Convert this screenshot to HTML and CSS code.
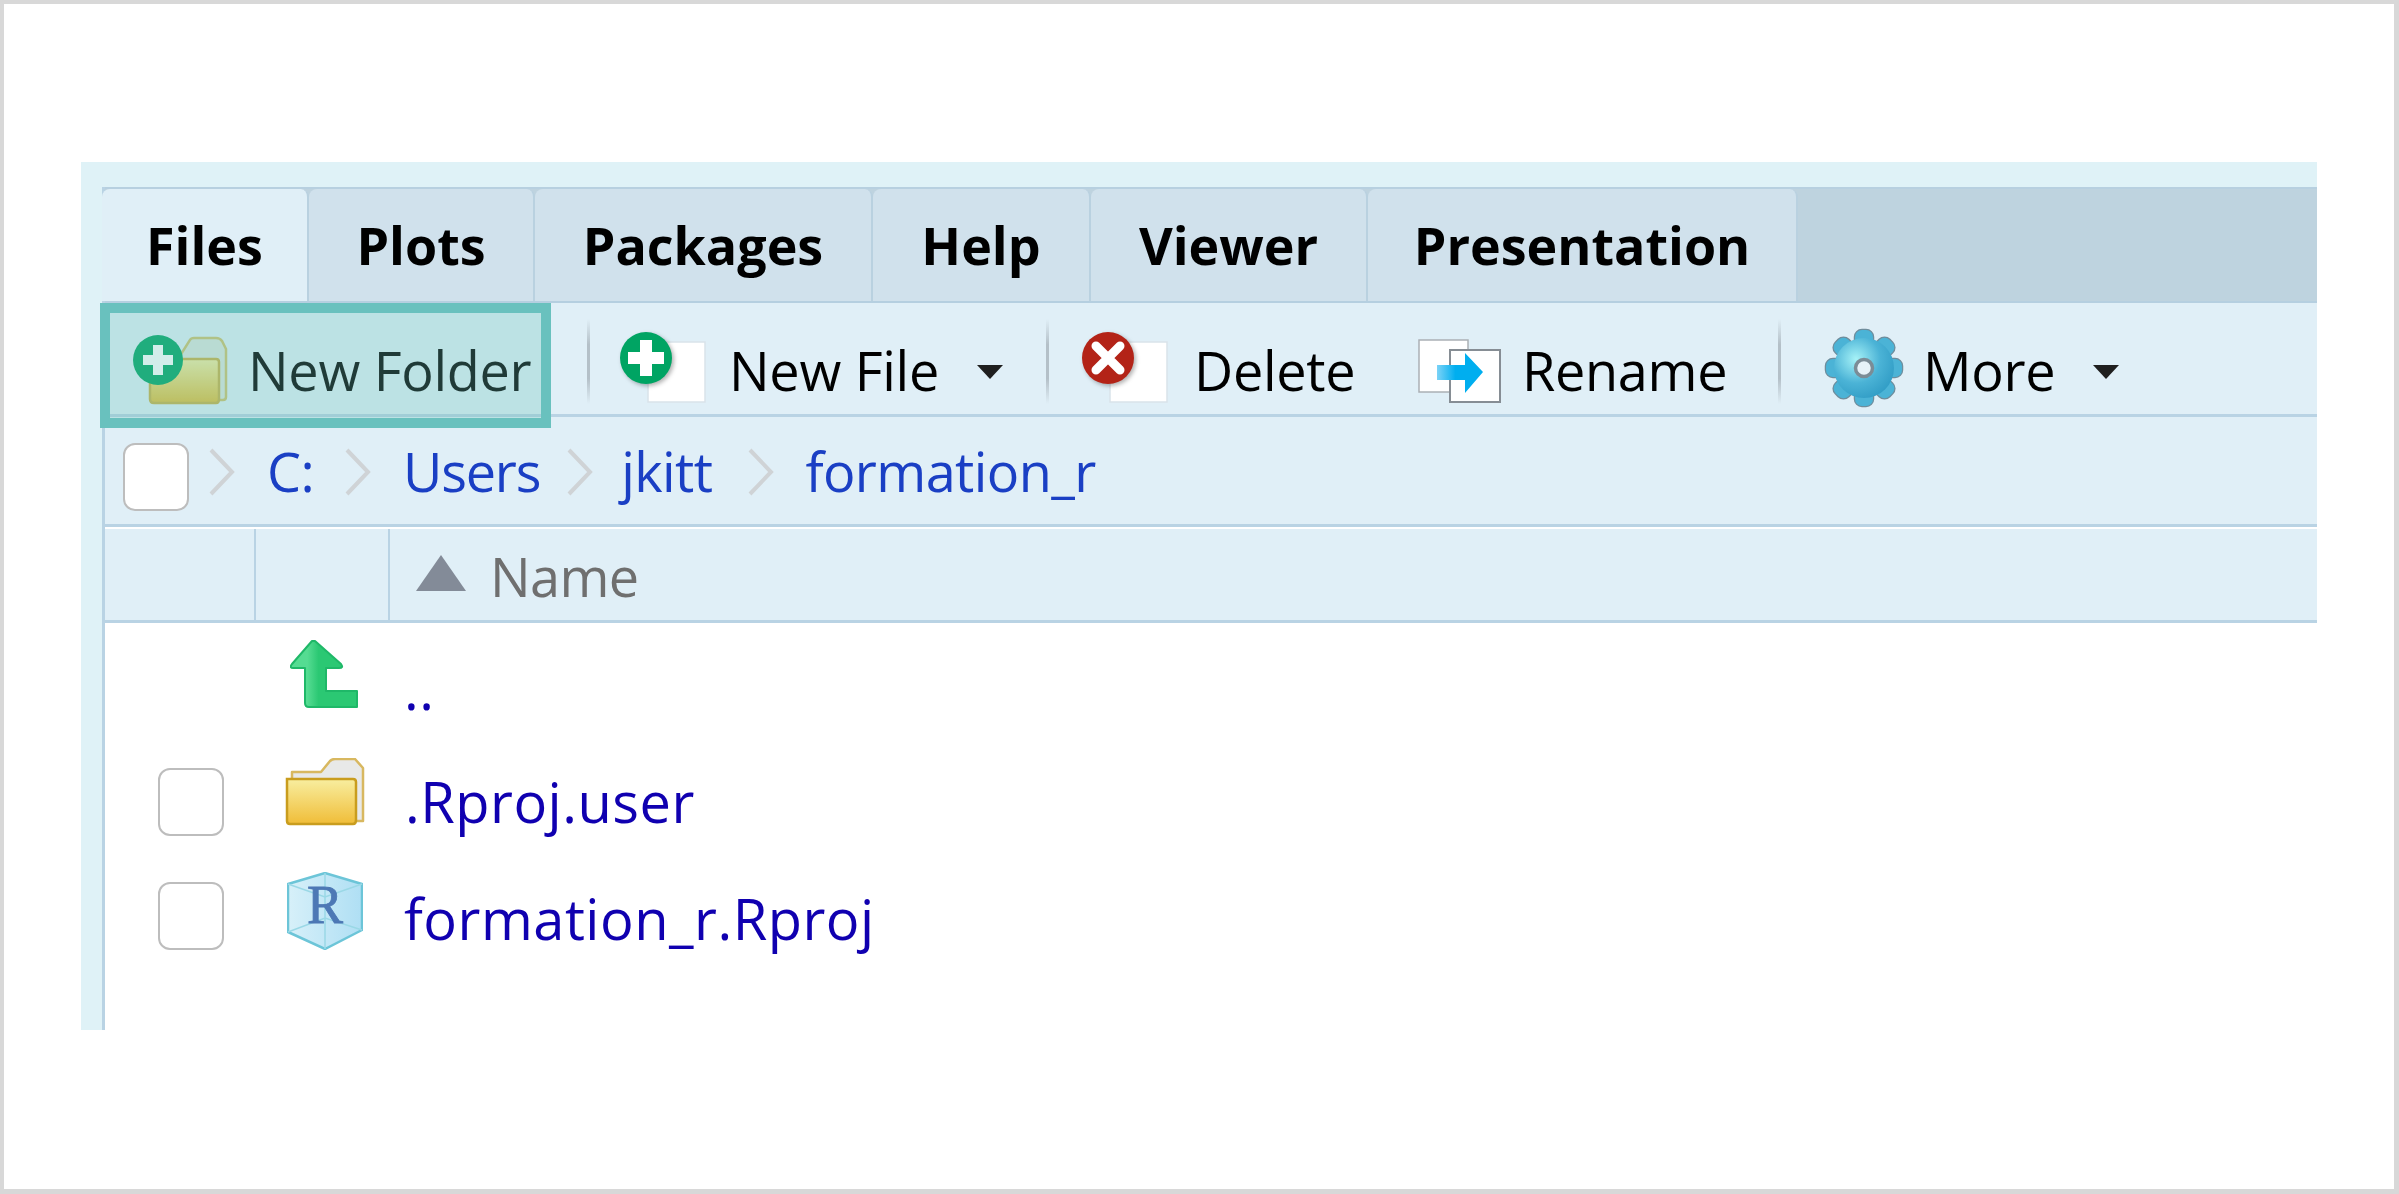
FILE: index.html
```html
<!DOCTYPE html>
<html lang="en">
<head>
<meta charset="utf-8">
<title>Files pane</title>
<link rel="stylesheet" href="styles.css">
</head>
<body>
<main class="panel">
  <div class="pane">
    <nav class="tabs">
      <div class="tab tab-files active">Files</div>
      <div class="tab tab-plots">Plots</div>
      <div class="tab tab-packages">Packages</div>
      <div class="tab tab-help">Help</div>
      <div class="tab tab-viewer">Viewer</div>
      <div class="tab tab-presentation">Presentation</div>
    </nav>
    <div class="toolbar">
      <div class="tool tool-folder">
        <svg class="ico ico-folder" viewBox="0 0 80 68">
          <defs><linearGradient id="fg1" x1="0" y1="0" x2="0" y2="1"><stop offset="0" stop-color="#f3eda5"/><stop offset="1" stop-color="#e0bd3c"/></linearGradient></defs>
          <path d="M30 22 L42 3 Q43 1 46 1 L68 1 Q72 1 74 4 L78 12 L78 60 Q78 63 75 63 L30 63Z" fill="#dbe6df" stroke="#cfc270" stroke-width="2.5"/>
          <path d="M2 22 H68 Q71 22 71 25 V62 Q71 66 68 66 H6 Q2 66 2 62Z" fill="url(#fg1)" stroke="#c9b048" stroke-width="2.5"/>
          <circle cx="10" cy="23" r="25" fill="#00a463"/>
          <path d="M5 8H15V18H25V28H15V38H5V28H-5V18H5Z" fill="#fff"/>
        </svg>
        <span>New Folder</span>
      </div>
      <div class="sep sep-a"></div>
      <div class="tool tool-file">
        <svg class="ico ico-page" viewBox="0 0 86 72">
          <rect x="28" y="10" width="57" height="60" fill="#fff" stroke="#d9e3ea" stroke-width="1.5"/>
          <circle class="badge" cx="26" cy="26" r="26" fill="#00a463"/>
          <path d="M20 8H32V20H44V32H32V44H20V32H8V20H20Z" fill="#fff"/>
        </svg>
        <span>New File</span>
      </div>
      <svg class="caret" viewBox="0 0 26 14"><path d="M0 0H26L13 14Z" fill="#1f1f1f"/></svg>
      <div class="sep sep-b"></div>
      <div class="tool tool-delete">
        <svg class="ico ico-page" viewBox="0 0 86 72">
          <rect x="28" y="10" width="57" height="60" fill="#fff" stroke="#d9e3ea" stroke-width="1.5"/>
          <circle class="badge" cx="26" cy="26" r="26" fill="#b32317"/>
          <path d="M26 26L14 14M26 26L38 14M26 26L14 38M26 26L38 38" stroke="#fff" stroke-width="9" stroke-linecap="round"/>
        </svg>
        <span>Delete</span>
      </div>
      <div class="tool tool-rename">
        <svg class="ico ico-rename" viewBox="0 0 84 64">
          <defs><linearGradient id="ar" x1="0" x2="1" y1="0" y2="0"><stop offset="0" stop-color="#7cd3f7"/><stop offset=".4" stop-color="#00aeef"/></linearGradient></defs>
          <rect x="1" y="1" width="49" height="52" fill="#fff" stroke="#aab0b5" stroke-width="1.5"/>
          <rect x="32" y="11" width="50" height="52" fill="#fff" stroke="#868d94" stroke-width="2"/>
          <path d="M19 26H47V14L65 33L47 54V41H19Z" fill="url(#ar)"/>
        </svg>
        <span>Rename</span>
      </div>
      <div class="sep sep-c"></div>
      <div class="tool tool-more">
        <svg class="ico ico-gear" viewBox="0 0 80 78">
          <defs>
            <radialGradient id="gr" gradientUnits="userSpaceOnUse" cx="32" cy="30" r="44"><stop offset="0" stop-color="#a6f2f7"/><stop offset=".55" stop-color="#4bb3d6"/><stop offset="1" stop-color="#2f9bc4"/></radialGradient>
            <g id="gear-shape">
              <circle cx="40" cy="39" r="28"/>
              <rect x="31" y="1" width="18" height="22" rx="7"/>
              <rect x="31" y="1" width="18" height="22" rx="7" transform="rotate(45 40 39)"/>
              <rect x="31" y="1" width="18" height="22" rx="7" transform="rotate(90 40 39)"/>
              <rect x="31" y="1" width="18" height="22" rx="7" transform="rotate(135 40 39)"/>
              <rect x="31" y="1" width="18" height="22" rx="7" transform="rotate(180 40 39)"/>
              <rect x="31" y="1" width="18" height="22" rx="7" transform="rotate(225 40 39)"/>
              <rect x="31" y="1" width="18" height="22" rx="7" transform="rotate(270 40 39)"/>
              <rect x="31" y="1" width="18" height="22" rx="7" transform="rotate(315 40 39)"/>
            </g>
          </defs>
          <use href="#gear-shape" fill="#6f8d9c" stroke="#6f8d9c" stroke-width="2.5"/>
          <use href="#gear-shape" fill="#4bb3d6"/>
          <circle cx="40" cy="39" r="30" fill="url(#gr)"/>
          <circle cx="40" cy="39" r="8.500" fill="#e6f2f8" stroke="#7b8c96" stroke-width="3.500"/>
        </svg>
        <span>More</span>
      </div>
      <svg class="caret" viewBox="0 0 26 14"><path d="M0 0H26L13 14Z" fill="#1f1f1f"/></svg>
    </div>
    <div class="crumbs">
      <div class="check check-home"></div>
      <svg class="chev chev-1" viewBox="0 0 26 48"><path d="M2 2L23 24L2 46" fill="none" stroke="#cfd3d6" stroke-width="4"/></svg>
      <a class="crumb crumb-c">C:</a>
      <svg class="chev chev-2" viewBox="0 0 26 48"><path d="M2 2L23 24L2 46" fill="none" stroke="#cfd3d6" stroke-width="4"/></svg>
      <a class="crumb crumb-users">Users</a>
      <svg class="chev chev-3" viewBox="0 0 26 48"><path d="M2 2L23 24L2 46" fill="none" stroke="#cfd3d6" stroke-width="4"/></svg>
      <a class="crumb crumb-jkitt">jkitt</a>
      <svg class="chev chev-4" viewBox="0 0 26 48"><path d="M2 2L23 24L2 46" fill="none" stroke="#cfd3d6" stroke-width="4"/></svg>
      <a class="crumb crumb-dir">formation_r</a>
    </div>
    <div class="thead">
      <div class="th th-check"></div>
      <div class="th th-icon"></div>
      <div class="th th-name">
        <svg class="sort" viewBox="0 0 50 36"><path d="M25 0L50 36H0Z" fill="#838b98"/></svg>
        <span class="th-label">Name</span>
      </div>
    </div>
    <div class="rows">
      <div class="row row-up">
        <div class="cell-check"></div>
        <svg class="file-ico up-ico" viewBox="0 0 68 68">
          <defs><linearGradient id="up" x1="0" x2="1" y1="0" y2="0"><stop offset=".25" stop-color="#55dc92"/><stop offset=".42" stop-color="#2bc873"/></linearGradient></defs>
          <path d="M25 1L51 24Q54 28 49 28H36V51H67V67H19Q15 67 15 63V28H3Q-1 28 2 24L22 1Z" fill="url(#up)" stroke="#1fb868" stroke-width="2" stroke-linejoin="round"/>
        </svg>
        <a class="fname fname-up">..</a>
      </div>
      <div class="row row-dir">
        <div class="cell-check"><div class="check"></div></div>
        <svg class="file-ico dir-ico" viewBox="0 0 80 68">
          <defs><linearGradient id="fg2" x1="0" y1="0" x2="0" y2="1"><stop offset="0" stop-color="#f8eea0"/><stop offset="1" stop-color="#f0bd38"/></linearGradient></defs>
          <path d="M7 14H36L45 3Q47 1 50 1H70L78 10V63H7Z" fill="#e8e9e8" stroke="#d8b860" stroke-width="2.500" stroke-linejoin="round"/>
          <path d="M2 21H68Q71 21 71 24V62Q71 66 68 66H5Q2 66 2 63V21Z" fill="url(#fg2)" stroke="#c99d1e" stroke-width="2.500"/>
        </svg>
        <a class="fname">.Rproj.user</a>
      </div>
      <div class="row row-proj">
        <div class="cell-check"><div class="check"></div></div>
        <svg class="file-ico proj-ico" viewBox="0 0 76 78">
          <defs><linearGradient id="cube" x1="0" x2="1" y1="0" y2="0"><stop offset="0" stop-color="#d7f0f9"/><stop offset="1" stop-color="#afdff4"/></linearGradient></defs>
          <path d="M38 1L75 12V58L38 77L1 60V12Z" fill="url(#cube)" stroke="#6cc5d8" stroke-width="2.500" stroke-linejoin="round"/>
          <path d="M1 12L38 25L75 12M38 1V77M1 60L38 46L75 58" fill="none" stroke="#9ad8e6" stroke-width="1.500"/>
          <text x="38" y="51" class="r-letter">R</text>
        </svg>
        <a class="fname">formation_r.Rproj</a>
      </div>
    </div>
  </div>
  <div class="highlight"></div>
</main>
</body>
</html>
```

FILE: styles.css
```css
* { box-sizing: border-box; }
html, body { margin: 0; height: 100%; }
body {
  background: #fff;
  border: 5px solid #d8d8d8;
  border-left-width: 4px;
  border-top-width: 4px;
  padding: 158px 77px 159px 77px;
  font-family: "Open Sans", "Liberation Sans", sans-serif;
}
.panel {
  position: relative;
  height: 868px;
  background: #dff2f7;
  padding: 25px 0 0 21px;
}
.pane {
  height: 100%;
  background: #fff;
  border-left: 3px solid #b9d3e4;
  display: flex;
  flex-direction: column;
}
.tabs {
  height: 116px;
  flex: none;
  display: flex;
  background: #bed3df;
  border-top: 2px solid #b7d0e0;
  border-bottom: 2px solid #b5cfe0;
}
.tab {
  display: flex;
  align-items: center;
  justify-content: center;
  background: #d0e1ec;
  border-right: 2px solid #b9d1e0;
  border-radius: 8px 8px 0 0;
  font-size: 52px;
  font-weight: 700;
  color: #000;
  padding-bottom: 2px;
}
.tab.active { background: #e0eff7; }
.tab-files { width: 207px; margin-left: -3px; }
.tab-plots { width: 226px; }
.tab-packages { width: 338px; }
.tab-help { width: 218px; }
.tab-viewer { width: 277px; }
.tab-presentation { width: 430px; }
.toolbar {
  height: 114px;
  flex: none;
  display: flex;
  align-items: flex-start;
  background: #e0eff7;
  border-bottom: 3px solid #b9d3e4;
  font-size: 54px;
  letter-spacing: -.3px;
  color: #000;
}
.tool { display: flex; align-items: flex-start; height: 100%; white-space: nowrap; flex: none; }
.tool span { margin-top: 31px; line-height: 72px; }
.ico { display: block; flex: none; }
.ico-folder { width: 80px; height: 68px; margin-top: 34px; overflow: visible; }
.ico-page { width: 86px; height: 72px; margin-top: 29px; overflow: visible; }
.ico-rename { width: 84px; height: 64px; margin-top: 36px; }
.ico-gear { width: 80px; height: 78px; margin-top: 26px; overflow: visible; }
.badge { filter: drop-shadow(2px 2px 2px rgba(0, 0, 0, .3)); }
.tool-folder { width: 439px; margin-left: 43px; }
.tool-folder span { margin-left: 20px; }
.tool-file { width: 357px; }
.tool-file span { margin-left: 23px; }
.tool-delete { width: 336px; }
.tool-delete span { margin-left: 26px; }
.tool-rename { width: 360px; }
.tool-rename span { margin-left: 20px; }
.tool-more { width: 269px; }
.tool-more span { margin-left: 19px; }
.sep {
  width: 3px;
  height: 85px;
  margin-top: 16px;
  flex: none;
  background: linear-gradient(#e0eff7, #b4c0c8 30%, #b4c0c8 70%, #e0eff7);
}
.sep-a { margin-right: 30px; }
.sep-b { margin-left: 43px; margin-right: 33px; }
.sep-c { margin-right: 43px; }
.caret { flex: none; width: 26px; height: 14px; margin-top: 62px; }
.crumbs {
  height: 110px;
  flex: none;
  display: flex;
  align-items: center;
  background: #e0eff7;
  border-bottom: 3px solid #b9d3e4;
  font-size: 54px;
  letter-spacing: -.6px;
}
.check {
  width: 66px;
  height: 68px;
  background: #fff;
  border: 2px solid #bdbdbd;
  border-radius: 12px;
  flex: none;
}
.check-home { margin-left: 18px; margin-top: 12px; }
.chev { flex: none; width: 26px; height: 48px; margin-top: 2px; }
.chev-1 { margin-left: 20px; }
.chev-2 { margin-left: 31px; }
.chev-3 { margin-left: 27px; }
.chev-4 { margin-left: 36px; }
.crumb { color: #1a3fc4; }
.crumb-c { margin-left: 32px; }
.crumb-users { margin-left: 32px; letter-spacing: -1.2px; }
.crumb-jkitt { margin-left: 28px; }
.crumb-dir { margin-left: 31px; }
.thead {
  height: 96px;
  flex: none;
  display: flex;
  background: #e0eff7;
  border-top: 2px solid #fff;
  border-bottom: 3px solid #b9d3e4;
}
.th { border-right: 2px solid #b9d3e4; }
.th-check { width: 151px; flex: none; }
.th-icon { width: 134px; flex: none; }
.th-name {
  flex: 1;
  border-right: 0;
  display: flex;
  align-items: center;
  color: #6f6f6f;
  font-size: 54px;
  letter-spacing: -.6px;
  padding-left: 26px;
}
.th-label { padding-top: 3px; }
.sort { width: 50px; height: 36px; margin-right: 24px; margin-top: -4px; }
.rows { flex: 1; background: #fff; padding-top: 17px; }
.row { display: flex; align-items: flex-start; height: 115px; }
.cell-check { width: 53px; flex: none; margin-left: 53px; }
.row .check { width: 66px; height: 68px; }
.file-ico { flex: none; display: block; }
.fname { color: #1000b0; font-size: 56px; letter-spacing: .5px; line-height: 72px; white-space: nowrap; }
.up-ico { width: 68px; height: 68px; margin-left: 79px; }
.fname-up { margin-left: 46px; margin-top: 12px; }
.row-dir .cell-check { margin-top: 13px; }
.dir-ico { width: 80px; height: 68px; margin-left: 74px; margin-top: 3px; }
.row-dir .fname { margin-left: 40px; margin-top: 10px; }
.row-proj .cell-check { margin-top: 12px; }
.proj-ico { width: 76px; height: 78px; margin-left: 76px; margin-top: 2px; }
.row-proj .fname { margin-left: 41px; margin-top: 12px; }
.r-letter {
  font-family: "Liberation Serif", serif;
  font-size: 54px;
  fill: #4d78b5;
  stroke: #4d78b5;
  stroke-width: .8px;
  text-anchor: middle;
}
.highlight {
  position: absolute;
  left: 19px;
  top: 141px;
  width: 451px;
  height: 125px;
  border: 10px solid #69c1be;
  background: rgba(107, 196, 187, .3);
}
```
